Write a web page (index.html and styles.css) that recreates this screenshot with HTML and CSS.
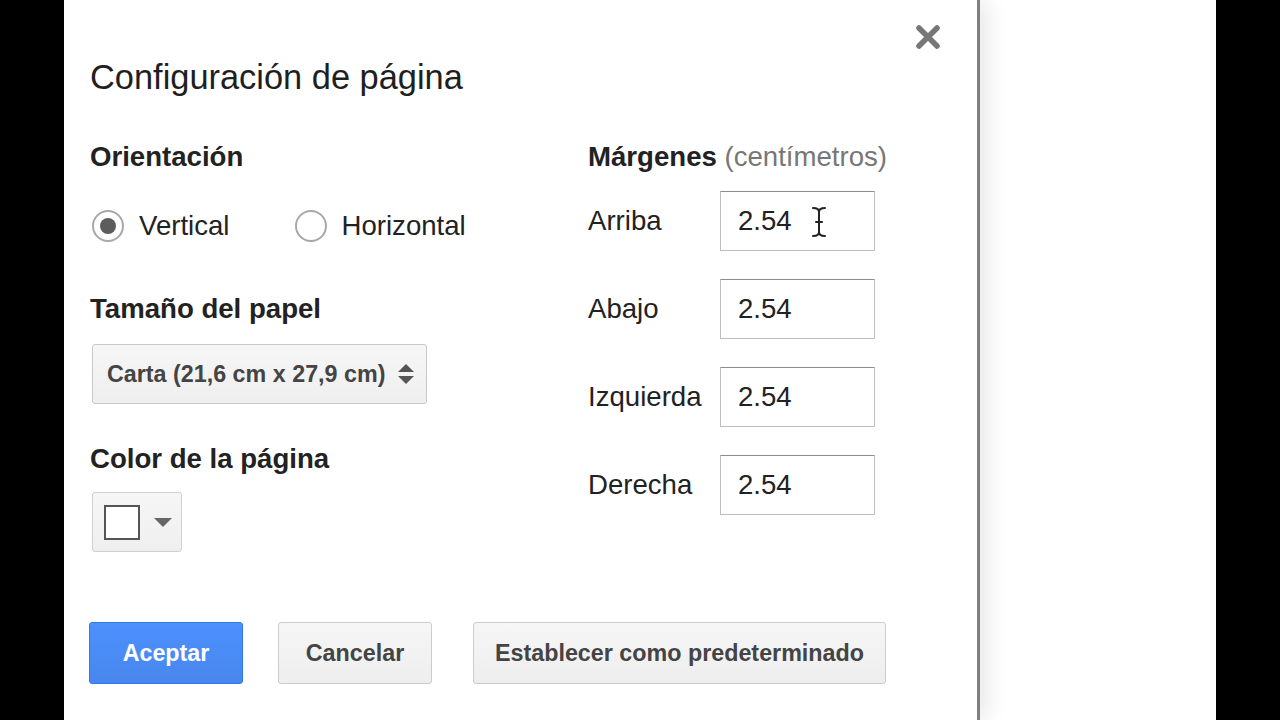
FILE: index.html
```html
<!DOCTYPE html>
<html lang="es">
<head>
<meta charset="utf-8">
<title>Configuración de página</title>
<link rel="stylesheet" href="styles.css">
</head>
<body>
<div class="stage">
  <div class="dialog">
    <button class="close" aria-label="Cerrar">
      <svg width="26" height="26" viewBox="0 0 26 26"><path d="M4 4 L22 22 M22 4 L4 22" stroke="#777" stroke-width="5.5" stroke-linecap="round" fill="none"/></svg>
    </button>
    <h1 class="title">Configuración de página</h1>

    <div class="columns">
      <div class="col-left">
        <h3 class="label-bold">Orientación</h3>
        <div class="radios">
          <label class="radio"><span class="dot checked"></span><span>Vertical</span></label>
          <label class="radio"><span class="dot"></span><span>Horizontal</span></label>
        </div>

        <h3 class="label-bold sec-paper">Tamaño del papel</h3>
        <div class="select">
          <span>Carta (21,6 cm x 27,9 cm)</span>
          <svg class="updown" width="18" height="22" viewBox="0 0 18 22"><path d="M1 9 L9 1 L17 9 Z M1 13 L17 13 L9 21 Z" fill="#555"/></svg>
        </div>

        <h3 class="label-bold sec-color">Color de la página</h3>
        <div class="color-btn">
          <span class="swatch"></span>
          <svg width="18" height="9" viewBox="0 0 18 9"><path d="M0 0 L18 0 L9 9 Z" fill="#666"/></svg>
        </div>
      </div>

      <div class="col-right">
        <h3 class="label-bold">Márgenes <span class="unit">(centímetros)</span></h3>
        <div class="margins">
          <div class="m-row"><span class="m-label">Arriba</span><div class="m-input">2.54</div>
            <svg class="ibeam" width="20" height="32" viewBox="0 0 20 32"><path d="M4 2 Q10 2 10 6 Q10 2 16 2 M10 6 L10 26 M4 30 Q10 30 10 26 Q10 30 16 30 M7 16 L13 16" stroke="#222" stroke-width="2" fill="none" stroke-linecap="round"/></svg>
          </div>
          <div class="m-row"><span class="m-label">Abajo</span><div class="m-input">2.54</div></div>
          <div class="m-row"><span class="m-label">Izquierda</span><div class="m-input">2.54</div></div>
          <div class="m-row"><span class="m-label">Derecha</span><div class="m-input">2.54</div></div>
        </div>
      </div>
    </div>

    <div class="footer">
      <button class="btn btn-primary">Aceptar</button>
      <button class="btn btn-cancel">Cancelar</button>
      <button class="btn btn-default">Establecer como predeterminado</button>
    </div>
  </div>
</div>
</body>
</html>
```

FILE: styles.css
```css
html, body {
  margin: 0;
  padding: 0;
  background: #000;
}

body {
  font-family: "Liberation Sans", Arial, Helvetica, sans-serif;
  color: #222;
}

.stage {
  margin-left: 64px;
  width: 1152px;
  height: 720px;
  background: #fff;
  overflow: hidden;
}

.dialog {
  position: relative;
  box-sizing: border-box;
  width: 916px;
  height: 720px;
  padding: 57px 0 0 26px;
  background: #fff;
  border-right: 3px solid #7f7f7f;
  box-shadow: 6px 0 22px rgba(0, 0, 0, 0.10);
}

.close {
  position: absolute;
  top: 24px;
  left: 851px;
  width: 26px;
  height: 26px;
  padding: 0;
  border: 0;
  background: none;
}

.close svg { display: block; }

.title {
  margin: 0;
  font-size: 34.4px;
  line-height: 40px;
  font-weight: normal;
  color: #1f1f1f;
}

.columns {
  display: flex;
  align-items: flex-start;
  margin-top: 44px;
}

.col-left {
  width: 497px;
  display: flex;
  flex-direction: column;
  align-items: flex-start;
}

.label-bold {
  margin: 0;
  font-size: 27.6px;
  line-height: 32px;
  font-weight: bold;
  color: #222;
}

.unit {
  font-weight: normal;
  color: #777;
}

.radios {
  display: flex;
  align-items: center;
  height: 32px;
  margin-top: 37px;
  font-size: 27.6px;
  color: #222;
}

.radio {
  display: flex;
  align-items: center;
  gap: 15px;
}

.radio + .radio { margin-left: 63px; }

.dot {
  box-sizing: border-box;
  width: 32px;
  height: 32px;
  margin-left: 2px;
  border: 2px solid #a8a8a8;
  border-radius: 50%;
  background: #fff;
  display: flex;
  align-items: center;
  justify-content: center;
}

.dot.checked::after {
  content: "";
  width: 16px;
  height: 16px;
  border-radius: 50%;
  background: #5c5c5c;
}

.sec-paper { margin-top: 51px; }

.select {
  box-sizing: border-box;
  display: flex;
  align-items: center;
  justify-content: space-between;
  width: 335px;
  height: 60px;
  margin: 19px 0 0 2px;
  padding: 0 11px 0 14px;
  border: 1px solid #c8c8c8;
  border-radius: 3px;
  background: linear-gradient(#f6f6f6, #efefef);
  font-size: 23.3px;
  font-weight: bold;
  color: #444;
}

.updown { display: block; }

.sec-color { margin-top: 39px; }

.color-btn {
  box-sizing: border-box;
  display: flex;
  align-items: center;
  width: 90px;
  height: 60px;
  margin: 17px 0 0 2px;
  padding-left: 11px;
  border: 1px solid #d0d0d0;
  border-radius: 3px;
  background: linear-gradient(#f6f6f6, #efefef);
}

.swatch {
  box-sizing: border-box;
  width: 36px;
  height: 35px;
  border: 2px solid #555;
  background: #fff;
  margin-right: 14px;
}

.color-btn svg { display: block; }

.col-right {
  display: flex;
  flex-direction: column;
  margin-left: 1px;
}

.margins {
  display: flex;
  flex-direction: column;
  gap: 28px;
  margin-top: 18px;
}

.m-row {
  position: relative;
  display: flex;
  align-items: center;
  height: 60px;
  font-size: 27.6px;
  color: #222;
}

.m-label {
  width: 132px;
}

.m-input {
  box-sizing: border-box;
  display: flex;
  align-items: center;
  width: 155px;
  height: 60px;
  padding-left: 17px;
  border: 1px solid #bdbdbd;
  border-top-color: #8c8c8c;
  background: #fff;
  color: #222;
}

.ibeam {
  position: absolute;
  left: 221px;
  top: 15px;
}

.footer {
  display: flex;
  margin-top: 70px;
  margin-left: -1px;
}

.btn {
  box-sizing: border-box;
  height: 62px;
  border-radius: 3px;
  font-family: inherit;
  font-size: 23.3px;
  font-weight: bold;
  padding: 0;
}

.btn-primary {
  width: 154px;
  background: linear-gradient(#4d90fe, #4787ed);
  border: 1px solid #3079ed;
  color: #fff;
}

.btn-cancel {
  width: 154px;
  margin-left: 35px;
}

.btn-default {
  width: 413px;
  margin-left: 41px;
}

.btn-cancel, .btn-default {
  background: linear-gradient(#f6f6f6, #eeeeee);
  border: 1px solid #cccccc;
  color: #444;
}
```
